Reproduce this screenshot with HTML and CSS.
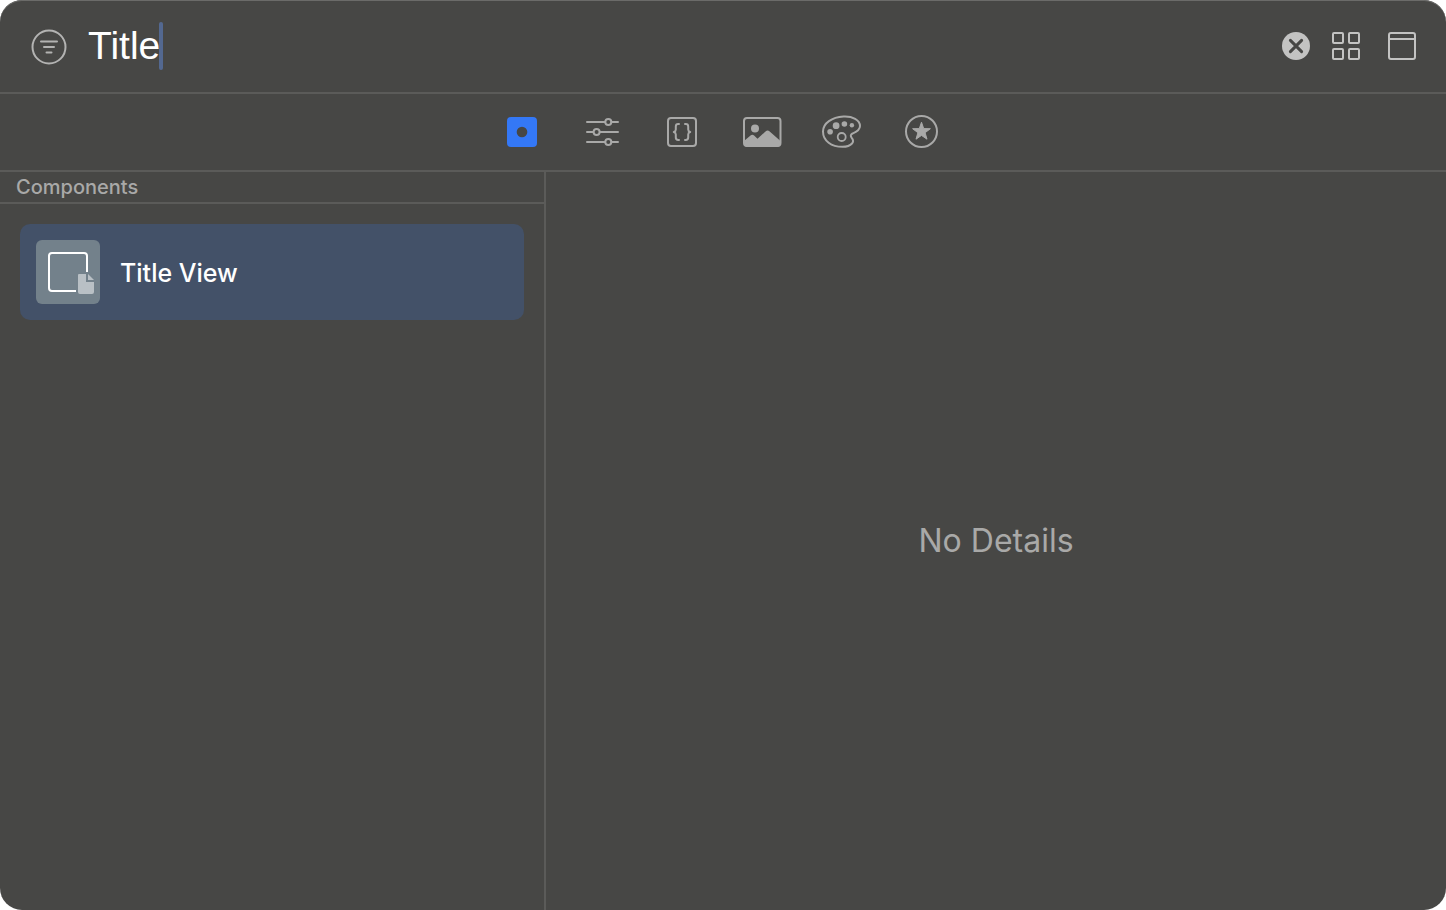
FILE: index.html
```html
<!DOCTYPE html>
<html lang="en">
<head>
<meta charset="utf-8">
<title>Library</title>
<link rel="stylesheet" href="styles.css">
</head>
<body>
<main class="library">
  <header class="search-bar">
    <button class="icon-button filter" type="button" aria-label="Filter">
      <svg width="36" height="38" viewBox="0 0 36 38" fill="none" stroke="currentColor" stroke-width="2" stroke-linecap="round"><circle cx="18" cy="20" r="16.5"/><path d="M10 14.500h16M13 20h10M15.500 25.500h5"/></svg>
    </button>
    <div class="search-field">
      <input class="search-input" type="text" value="Title" aria-label="Search library" spellcheck="false">
      <span class="caret"></span>
    </div>
    <button class="icon-button" type="button" aria-label="Clear">
      <svg width="28" height="28" viewBox="0 0 28 28"><circle cx="14" cy="14" r="14" fill="currentColor"/><path d="M8.4 8.4l11.2 11.2M19.6 8.4L8.4 19.6" stroke="#474745" stroke-width="3" stroke-linecap="round"/></svg>
    </button>
    <div class="view-buttons">
      <button class="icon-button" type="button" aria-label="Grid view">
        <svg width="28" height="28" viewBox="0 0 28 28" fill="none" stroke="currentColor" stroke-width="2"><rect x="1" y="1" width="10" height="10" rx="1"/><rect x="17" y="1" width="10" height="10" rx="1"/><rect x="1" y="17" width="10" height="10" rx="1"/><rect x="17" y="17" width="10" height="10" rx="1"/></svg>
      </button>
      <button class="icon-button" type="button" aria-label="Toggle details">
        <svg width="28" height="28" viewBox="0 0 28 28" fill="none" stroke="currentColor" stroke-width="2"><rect x="1" y="1" width="26" height="26" rx="2"/><path d="M1 7h26"/></svg>
      </button>
    </div>
  </header>

  <nav class="tabs" aria-label="Library categories">
    <button class="icon-button tab tab-active" type="button" aria-label="Views">
      <svg width="40" height="40" viewBox="0 0 40 40"><rect x="5" y="5" width="30" height="30" rx="4" fill="currentColor"/><circle cx="20" cy="20" r="5.3" fill="#474745"/></svg>
    </button>
    <button class="icon-button tab" type="button" aria-label="Modifiers">
      <svg width="40" height="40" viewBox="0 0 40 40" fill="none" stroke="currentColor" stroke-width="2" stroke-linecap="round"><path d="M5 10h18M30 10h6M5 20h6M18 20h18M5 30h18M30 30h6"/><circle cx="26.3" cy="10" r="3"/><circle cx="14.6" cy="20" r="3"/><circle cx="26.3" cy="30" r="3"/></svg>
    </button>
    <button class="icon-button tab" type="button" aria-label="Snippets">
      <svg width="40" height="40" viewBox="0 0 40 40" fill="none" stroke="currentColor" stroke-width="2" stroke-linecap="round" stroke-linejoin="round"><rect x="6" y="6" width="28" height="28" rx="3"/><path d="M17 12h-.8q-2.400 0-2.400 2.400v3q0 2-2 2.600q2 .6 2 2.600v3q0 2.400 2.400 2.400h.8M23 12h.8q2.400 0 2.400 2.400v3q0 2 2 2.600q-2 .6-2 2.600v3q0 2.400-2.400 2.400h-.8"/></svg>
    </button>
    <button class="icon-button tab" type="button" aria-label="Media">
      <svg width="40" height="40" viewBox="0 0 40 40"><rect x="2" y="6" width="36.5" height="28" rx="3" fill="none" stroke="currentColor" stroke-width="2"/><circle cx="13" cy="16.5" r="4" fill="currentColor"/><path fill="currentColor" d="M2 29l6.500-5.500q1.800-1.500 3.600 0l3.400 3.200 8-7.200q2.100-1.800 4.200 0L38.500 29v2q0 4-4 4H6q-4 0-4-4z"/></svg>
    </button>
    <button class="icon-button tab" type="button" aria-label="Colors">
      <svg width="40" height="40" viewBox="0 0 40 40"><path fill="none" stroke="currentColor" stroke-width="2" stroke-linejoin="round" d="M21.500 4.500C30.500 4 38 8 38 14C38 18.500 33.500 20.200 30.500 21.500C28.500 22.500 28.300 24 29.700 25.800C31.500 28 31.700 29.600 30 31.500C27.800 34 24.500 34.800 20.500 34.800C9.500 34.800 1 29 1 19.500C1 11 10 5.200 21.500 4.500Z"/><g fill="currentColor"><circle cx="14.100" cy="13.700" r="3.400"/><circle cx="22.400" cy="12" r="2.800"/><circle cx="29.900" cy="13.300" r="2.200"/><circle cx="8.100" cy="19.700" r="2.800"/></g><circle cx="19.700" cy="25" r="4" fill="none" stroke="currentColor" stroke-width="1.800"/></svg>
    </button>
    <button class="icon-button tab" type="button" aria-label="Symbols">
      <svg width="40" height="40" viewBox="0 0 40 40"><circle cx="19.500" cy="19.500" r="15.500" fill="none" stroke="currentColor" stroke-width="2"/><path fill="currentColor" stroke="currentColor" stroke-linejoin="round" d="M19.500 10.200L21.700 16.600 28.400 16.700 23.100 20.700 25 27.200 19.500 23.400 14 27.200 15.900 20.700 10.600 16.700 17.300 16.600Z"/></svg>
    </button>
  </nav>

  <div class="panes">
    <section class="list-pane">
      <h2 class="section-title">Components</h2>
      <ul class="component-list">
        <li>
          <button class="component component-selected" type="button">
            <svg class="component-icon" width="64" height="64" viewBox="0 0 64 64"><rect width="64" height="64" rx="6" fill="#73818b"/><path fill="none" stroke="#fff" stroke-width="2" d="M51 32V16q0-3-3-3H16q-3 0-3 3v32q0 3 3 3h24"/><path fill="#b9c0c5" d="M43 34h7v8h8v10q0 2-2 2H44q-2 0-2-2V35q0-1 1-1z"/><path fill="#b9c0c5" d="M52 34l6 6h-6z"/></svg>
            <span class="component-name">Title View</span>
          </button>
        </li>
      </ul>
    </section>
    <section class="detail-pane">
      <p class="empty-text">No Details</p>
    </section>
  </div>
</main>
</body>
</html>
```

FILE: styles.css
```css
* {
  box-sizing: border-box;
}

body {
  margin: 0;
  background: #fff;
  font-family: Inter, "Liberation Sans", sans-serif;
}

.library {
  display: flex;
  flex-direction: column;
  min-height: 100vh;
  overflow: hidden;
  border-radius: 22px;
  background: #474745;
  box-shadow: inset 0 1px #6b6b69;
  color: #a9a9a8;
}

.icon-button {
  display: flex;
  align-items: center;
  justify-content: center;
  padding: 0;
  border: 0;
  background: none;
  color: #c3c3c2;
}

.search-bar {
  display: flex;
  align-items: center;
  height: 94px;
  padding: 0 30px 0 31px;
  border-bottom: 2px solid #5b5b59;
}

.filter {
  color: #b3b3b2;
}

.search-field {
  position: relative;
  flex: 1;
  margin: 0 22px 0 21px;
}

.search-input {
  display: block;
  width: 100%;
  height: 48px;
  padding: 0;
  border: 0;
  outline: 0;
  background: none;
  color: #fff;
  font: 400 39px/48px "Liberation Sans", Arial, sans-serif;
}

.caret {
  position: absolute;
  top: 0;
  left: 71px;
  width: 4px;
  height: 48px;
  border-radius: 2px;
  background: #536890;
}

.view-buttons {
  display: flex;
  gap: 28px;
  margin-left: 22px;
}

.tabs {
  display: flex;
  justify-content: center;
  height: 78px;
  padding-right: 2px;
  border-bottom: 2px solid #5b5b59;
}

.tab {
  width: 80px;
  color: #a9a9a8;
}

.tab-active {
  color: #3478f6;
}

.panes {
  display: flex;
  flex: 1;
}

.list-pane {
  flex: 0 0 546px;
  border-right: 2px solid #5b5b59;
}

.section-title {
  margin: 0;
  padding: 0 16px;
  border-bottom: 2px solid #5b5b59;
  font-size: 20px;
  font-weight: 500;
  line-height: 30px;
}

.component-list {
  margin: 0;
  padding: 20px;
  list-style: none;
}

.component {
  display: flex;
  align-items: center;
  gap: 20px;
  width: 100%;
  padding: 16px;
  border: 0;
  border-radius: 10px;
  background: none;
  color: #fff;
  font: 500 25px/32px Inter, "Liberation Sans", sans-serif;
}

.component-name {
  padding-top: 2px;
}

.component-selected {
  background: #435168;
}

.detail-pane {
  display: flex;
  flex: 1;
  align-items: center;
  justify-content: center;
}

.empty-text {
  margin: 0;
  font-size: 32px;
  line-height: 40px;
}
```
